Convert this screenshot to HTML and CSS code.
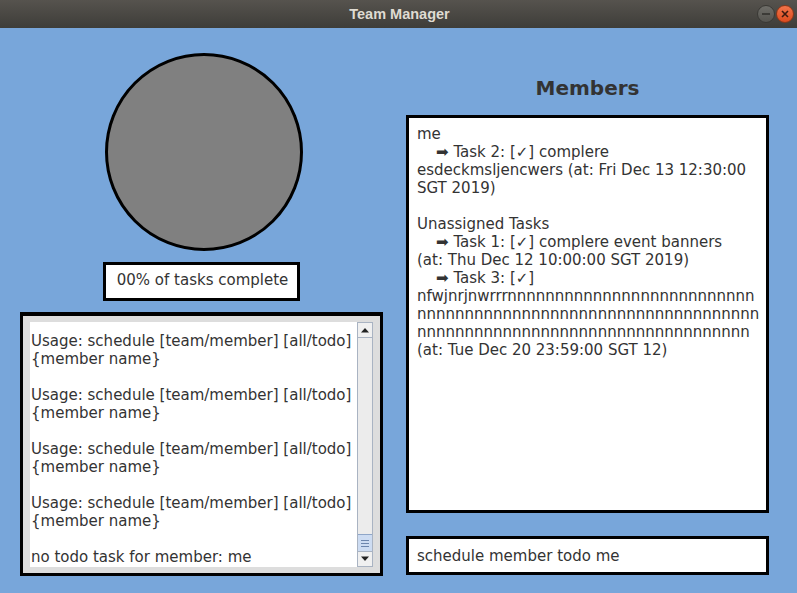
FILE: index.html
```html
<!DOCTYPE html>
<html>
<head>
<meta charset="utf-8">
<link rel="stylesheet" href="styles.css">
</head>
<body>
<div class="titlebar">
  <span class="title">Team Manager</span>
  <div class="winbtns">
    <span class="wbtn min"><svg width="10" height="10" viewBox="0 0 10 10"><rect x="1" y="4" width="8" height="2" fill="#3c3b37"/></svg></span>
    <span class="wbtn close"><svg width="10" height="10" viewBox="0 0 10 10"><path d="M2 2L8 8M8 2L2 8" stroke="#3c1a10" stroke-width="1.6"/></svg></span>
  </div>
</div>
<div class="main">
  <div class="leftcol">
    <div class="circle"></div>
    <div class="progress">00% of tasks complete</div>
    <div class="console">
      <div class="console-inner">
        <div class="console-text">
          <div class="ln">Usage: schedule [team/member] [all/todo]</div>
          <div class="ln">{member name}</div>
          <div class="ln">&nbsp;</div>
          <div class="ln">Usage: schedule [team/member] [all/todo]</div>
          <div class="ln">{member name}</div>
          <div class="ln">&nbsp;</div>
          <div class="ln">Usage: schedule [team/member] [all/todo]</div>
          <div class="ln">{member name}</div>
          <div class="ln">&nbsp;</div>
          <div class="ln">Usage: schedule [team/member] [all/todo]</div>
          <div class="ln">{member name}</div>
          <div class="ln">&nbsp;</div>
          <div class="ln">no todo task for member: me</div>
        </div>
        <div class="scrollbar">
          <div class="sb-btn"><svg width="10" height="6" viewBox="0 0 10 6"><path d="M1 5.5L5 1L9 5.5Z" fill="#222"/></svg></div>
          <div class="sb-track"></div>
          <div class="sb-thumb"><span></span><span></span><span></span></div>
          <div class="sb-btn"><svg width="10" height="6" viewBox="0 0 10 6"><path d="M1 0.5L9 0.5L5 5Z" fill="#222"/></svg></div>
        </div>
      </div>
    </div>
  </div>
  <div class="rightcol">
    <h1 class="heading">Members</h1>
    <div class="members">
      <div class="ln">me</div>
      <div class="ln">    ➡ Task 2: [✓] complere</div>
      <div class="ln">esdeckmsljencwers (at: Fri Dec 13 12:30:00</div>
      <div class="ln">SGT 2019)</div>
      <div class="ln">&nbsp;</div>
      <div class="ln">Unassigned Tasks</div>
      <div class="ln">    ➡ Task 1: [✓] complere event banners</div>
      <div class="ln">(at: Thu Dec 12 10:00:00 SGT 2019)</div>
      <div class="ln">    ➡ Task 3: [✓]</div>
      <div class="ln">nfwjnrjnwrrrnnnnnnnnnnnnnnnnnnnnnnnnnn</div>
      <div class="ln">nnnnnnnnnnnnnnnnnnnnnnnnnnnnnnnnnnnn</div>
      <div class="ln">nnnnnnnnnnnnnnnnnnnnnnnnnnnnnnnnnnn</div>
      <div class="ln">(at: Tue Dec 20 23:59:00 SGT 12)</div>
    </div>
    <div class="input">schedule member todo me</div>
  </div>
</div>
</body>
</html>
```
FILE: styles.css
```css
* { box-sizing: border-box; }
html, body {
  margin: 0;
  padding: 0;
  width: 797px;
  height: 593px;
  overflow: hidden;
  background: #78a6da;
  font-family: "DejaVu Sans", sans-serif;
  font-size: 15px;
  color: #333333;
}
.titlebar {
  height: 28px;
  background: linear-gradient(#56534e, #3e3d39);
  display: flex;
  align-items: center;
  justify-content: center;
  position: relative;
}
.title {
  font-family: "Liberation Sans", sans-serif;
  font-weight: bold;
  font-size: 14.5px;
  color: #dfdbd2;
  margin-left: 2px;
}
.winbtns {
  position: absolute;
  right: 3px;
  top: 5px;
  display: flex;
  gap: 1px;
}
.wbtn {
  width: 18px;
  height: 18px;
  border-radius: 50%;
  display: flex;
  align-items: center;
  justify-content: center;
}
.wbtn.min {
  background: linear-gradient(#6f6e69, #55544f);
  border: 1px solid #3a3935;
}
.wbtn.close {
  background: linear-gradient(#f2744a, #dc4b1e);
  border: 1px solid #8c3618;
}
.main {
  display: flex;
  padding-left: 20px;
  gap: 23px;
}
.leftcol {
  width: 363px;
  display: flex;
  flex-direction: column;
  align-items: center;
}
.circle {
  margin-top: 25px;
  margin-left: 4px;
  width: 198px;
  height: 198px;
  border-radius: 50%;
  background: #808080;
  border: 3px solid #000;
}
.progress {
  margin-top: 11px;
  width: 197px;
  height: 39px;
  border: 3px solid #000;
  background: #fff;
  display: flex;
  align-items: center;
  justify-content: center;
  padding-left: 2px;
  padding-bottom: 3px;
}
.ln {
  white-space: pre;
  line-height: 18px;
  height: 18px;
}
.console {
  margin-top: 11px;
  width: 363px;
  height: 264px;
  border: 3px solid #000;
  border-top-width: 4px;
  background: #dddddd;
  padding: 6px 7px 6px 7px;
}
.console-inner {
  display: flex;
  height: 100%;
  background: #fff;
}
.console-text {
  flex: 1;
  padding: 10px 0 0 1px;
  overflow: hidden;
}
.scrollbar {
  width: 16px;
  display: flex;
  flex-direction: column;
  background: #ececec;
  border-left: 1px solid #a9b3c2;
  border-right: 1px solid #a9b3c2;
}
.sb-btn {
  height: 16px;
  display: flex;
  align-items: center;
  justify-content: center;
  background: #f0f0f0;
  border-top: 1px solid #a9b3c2;
  border-bottom: 1px solid #a9b3c2;
}
.sb-track { flex: 1; }
.sb-thumb {
  height: 17px;
  background: #cddcf2;
  border-top: 1px solid #8fa6c8;
  display: flex;
  flex-direction: column;
  justify-content: center;
  align-items: center;
  gap: 2px;
}
.sb-thumb span {
  width: 8px;
  height: 1px;
  background: #6d86ad;
}
.rightcol {
  width: 363px;
  display: flex;
  flex-direction: column;
}
.heading {
  margin: 0;
  padding-top: 48px;
  height: 87px;
  line-height: 24px;
  font-size: 20px;
  font-weight: bold;
  text-align: center;
  color: #333333;
}
.members {
  height: 398px;
  border: 3px solid #000;
  background: #fff;
  padding: 7px 0 0 8px;
  overflow: hidden;
}
.input {
  margin-top: 23px;
  height: 39px;
  border: 3px solid #000;
  background: #fff;
  padding-left: 8px;
  display: flex;
  align-items: center;
}
```
